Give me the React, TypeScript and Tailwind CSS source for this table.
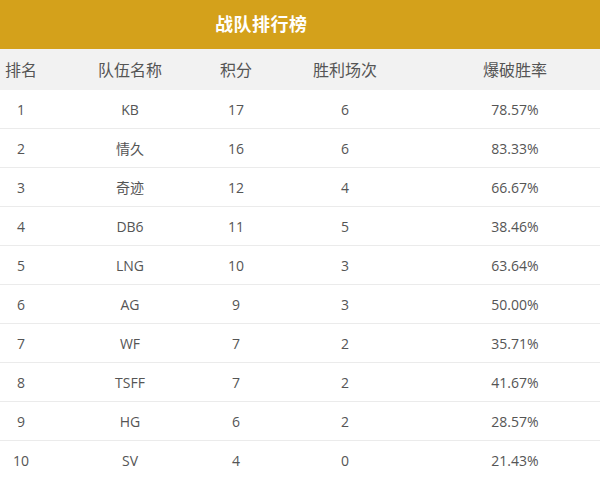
import React from "react";

const rows = [
  ["1", "KB", "17", "6", "78.57%"],
  ["2", "情久", "16", "6", "83.33%"],
  ["3", "奇迹", "12", "4", "66.67%"],
  ["4", "DB6", "11", "5", "38.46%"],
  ["5", "LNG", "10", "3", "63.64%"],
  ["6", "AG", "9", "3", "50.00%"],
  ["7", "WF", "7", "2", "35.71%"],
  ["8", "TSFF", "7", "2", "41.67%"],
  ["9", "HG", "6", "2", "28.57%"],
  ["10", "SV", "4", "0", "21.43%"],
];

const headers = ["排名", "队伍名称", "积分", "胜利场次", "爆破胜率"];

export default function App() {
  return (
    <div
      className="w-[600px] h-[479px] bg-white overflow-hidden"
      style={{ fontFamily: '"Open Sans", "Noto Sans CJK SC", sans-serif' }}
    >
      <div className="h-[49px] bg-[#d4a11b] flex items-center pl-[215px]">
        <span className="text-white text-[18px] font-bold tracking-[0.5px]">战队排行榜</span>
      </div>
      <div className="h-[41px] bg-[#f2f2f2] grid grid-cols-[42px_176px_36px_182px_158px_1fr] items-center text-[16px] text-[#555]">
        {headers.map((h) => (
          <div key={h} className="text-center whitespace-nowrap">{h}</div>
        ))}
        <div />
      </div>
      {rows.map((r) => (
        <div
          key={r[0]}
          className="h-[39px] border-b border-[#ebebeb] grid grid-cols-[42px_176px_36px_182px_158px_1fr] items-center text-[14px] text-[#555]"
        >
          {r.map((c, i) => (
            <div key={i} className="text-center whitespace-nowrap">{c}</div>
          ))}
          <div />
        </div>
      ))}
    </div>
  );
}
